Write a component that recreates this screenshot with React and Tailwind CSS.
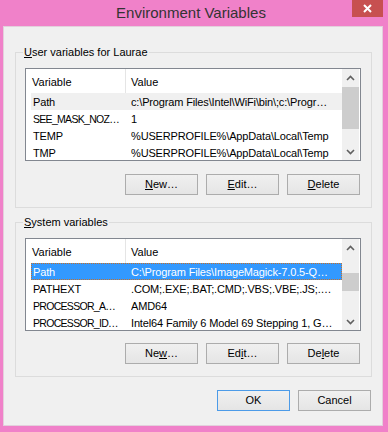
import React from 'react';

const userVars = [
  ['Path', 'c:\\Program Files\\Intel\\WiFi\\bin\\;c:\\Progr…'],
  ['SEE_MASK_NOZ…', '1'],
  ['TEMP', '%USERPROFILE%\\AppData\\Local\\Temp'],
  ['TMP', '%USERPROFILE%\\AppData\\Local\\Temp'],
];

const systemVars = [
  ['Path', 'C:\\Program Files\\ImageMagick-7.0.5-Q…'],
  ['PATHEXT', '.COM;.EXE;.BAT;.CMD;.VBS;.VBE;.JS;.…'],
  ['PROCESSOR_A…', 'AMD64'],
  ['PROCESSOR_ID…', 'Intel64 Family 6 Model 69 Stepping 1, G…'],
];

function Chevron({ down }) {
  return (
    <svg width="9" height="6" viewBox="0 0 9 6">
      <path
        d={down ? 'M1 1 L4.5 4.5 L8 1' : 'M1 5 L4.5 1.5 L8 5'}
        fill="none"
        stroke="#606060"
        strokeWidth="1.6"
      />
    </svg>
  );
}

function Button({ children, primary }) {
  return (
    <button
      className={
        primary
          ? 'w-[73px] h-[21px] border border-[#4c9be8] bg-linear-to-b from-[#f0f0f0] to-[#e5e5e5] text-[11px] text-black leading-none'
          : 'w-[73px] h-[21px] border border-[#acacac] bg-linear-to-b from-[#f0f0f0] to-[#e5e5e5] text-[11px] text-black leading-none'
      }
    >
      {children}
    </button>
  );
}

function ListView({ rows, active, thumbTop, thumbHeight }) {
  return (
    <div className="w-[336px] h-[93px] border border-[#828790] bg-white flex overflow-hidden">
      <div className="flex-1 flex flex-col min-w-0">
        {/* Header */}
        <div className="h-[24px] flex shrink-0">
          <div className="w-[100px] h-full border-r border-[#e5e5e5] pl-[6px] flex items-center pt-[2px]">
            Variable
          </div>
          <div className="pl-[5px] flex items-center pt-[2px]">Value</div>
        </div>
        {/* Rows */}
        <div className="pl-[5px] flex flex-col tracking-[-0.15px]">
          {rows.map(([name, value], i) => {
            let rowCls = 'h-[17px] flex items-center whitespace-nowrap overflow-hidden pt-[2px] shrink-0';
            if (i === 0 && active) {
              rowCls += ' bg-[#3399ff] text-white outline-1 outline-dotted -outline-offset-1 outline-[#c87028]';
            } else if (i === 0) {
              rowCls += ' bg-[#f0f0f0]';
            }
            // names cut short by the column get squeezed a little, like the narrower system font
            const nameCls = name.endsWith('…')
              ? 'w-[100px] pl-[2px] shrink-0 overflow-hidden text-[10.5px] tracking-[-0.7px]'
              : 'w-[100px] pl-[2px] shrink-0 overflow-hidden';
            return (
              <div key={i} className={rowCls}>
                <div className={nameCls}>{name}</div>
                <div className="overflow-hidden">{value}</div>
              </div>
            );
          })}
        </div>
      </div>
      {/* Scrollbar */}
      <div className="w-[17px] mr-[1px] bg-[#f0f0f0] flex flex-col shrink-0">
        <div className="h-[17px] flex items-center justify-center">
          <Chevron />
        </div>
        <div className="flex-1 relative">
          <div
            className="absolute left-0 right-0 bg-[#cdcdcd]"
            style={{ top: thumbTop, height: thumbHeight }}
          />
        </div>
        <div className="h-[17px] flex items-center justify-center">
          <Chevron down />
        </div>
      </div>
    </div>
  );
}

function GroupBox({ label, children, className }) {
  return (
    <div className={'relative w-[357px] border border-[#dcdcdc] pt-[15px] pl-[9px] pb-[12px] ' + className}>
      <div className="absolute left-[7px] top-[-8px] px-[1px] bg-[#f0f0f0] leading-[15px]">{label}</div>
      {children}
    </div>
  );
}

export default function App() {
  return (
    <div className="w-[388px] h-[432px] bg-[#f081c9] font-['Liberation_Sans',Arial,sans-serif] text-[11px] text-black overflow-hidden">
      {/* Title bar */}
      <div className="h-[26px] flex">
        <div className="flex-1 flex justify-center items-center pl-[30px] pt-[1px] text-[15px] text-[#333]">
          Environment Variables
        </div>
        <div className="w-[31px] h-[17px] mr-[5px] bg-[#c75050] flex items-center justify-center">
          <svg width="9" height="9" viewBox="0 0 9 9">
            <path d="M1 1 L8 8 M8 1 L1 8" stroke="white" strokeWidth="2" />
          </svg>
        </div>
      </div>

      {/* Client area */}
      <div className="ml-[3px] w-[380px] h-[400px] border border-[#e3d0dc] bg-[#f0f0f0] pl-[11px] pt-[25px] flex flex-col">
        <GroupBox label={<><span className="underline">U</span>ser variables for Laurae</>}>
          <ListView rows={userVars} thumbTop={1} thumbHeight={42} />
          <div className="flex justify-end gap-[8px] w-[336px] pr-[1px] mt-[13px]">
            <Button><span className="underline">N</span>ew…</Button>
            <Button><span className="underline">E</span>dit…</Button>
            <Button><span className="underline">D</span>elete</Button>
          </div>
        </GroupBox>

        <GroupBox className="mt-[14px]" label={<><span className="underline">S</span>ystem variables</>}>
          <ListView rows={systemVars} active thumbTop={17} thumbHeight={18} />
          <div className="flex justify-end gap-[8px] w-[336px] pr-[1px] mt-[12px]">
            <Button>Ne<span className="underline">w</span>…</Button>
            <Button>Ed<span className="underline">i</span>t…</Button>
            <Button>De<span className="underline">l</span>ete</Button>
          </div>
        </GroupBox>

        <div className="flex justify-end gap-[8px] w-[357px] pr-[1px] mt-[13px]">
          <Button primary>OK</Button>
          <Button>Cancel</Button>
        </div>
      </div>
    </div>
  );
}
